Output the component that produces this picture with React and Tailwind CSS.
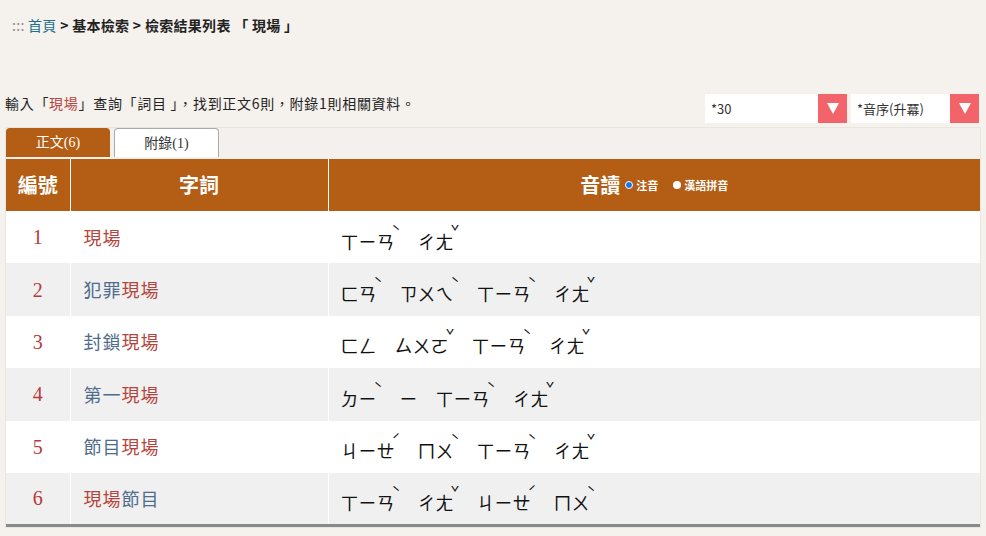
import React from "react";

const ROWS = [
  {
    no: 1,
    word: [["現場", "r"]],
    zy: [["ㄒㄧㄢ", "ˋ"], ["ㄔㄤ", "ˇ"]],
  },
  {
    no: 2,
    word: [["犯罪", "b"], ["現場", "r"]],
    zy: [["ㄈㄢ", "ˋ"], ["ㄗㄨㄟ", "ˋ"], ["ㄒㄧㄢ", "ˋ"], ["ㄔㄤ", "ˇ"]],
  },
  {
    no: 3,
    word: [["封鎖", "b"], ["現場", "r"]],
    zy: [["ㄈㄥ", ""], ["ㄙㄨㄛ", "ˇ"], ["ㄒㄧㄢ", "ˋ"], ["ㄔㄤ", "ˇ"]],
  },
  {
    no: 4,
    word: [["第一", "b"], ["現場", "r"]],
    zy: [["ㄉㄧ", "ˋ"], ["ㄧ", ""], ["ㄒㄧㄢ", "ˋ"], ["ㄔㄤ", "ˇ"]],
  },
  {
    no: 5,
    word: [["節目", "b"], ["現場", "r"]],
    zy: [["ㄐㄧㄝ", "ˊ"], ["ㄇㄨ", "ˋ"], ["ㄒㄧㄢ", "ˋ"], ["ㄔㄤ", "ˇ"]],
  },
  {
    no: 6,
    word: [["現場", "r"], ["節目", "b"]],
    zy: [["ㄒㄧㄢ", "ˋ"], ["ㄔㄤ", "ˇ"], ["ㄐㄧㄝ", "ˊ"], ["ㄇㄨ", "ˋ"]],
  },
];

const CJK = "font-['Microsoft_JhengHei','Noto_Sans_CJK_TC',sans-serif]";

function Select({ label, width }) {
  return (
    <div className={`flex h-[29px] ${width}`}>
      <div className="flex-1 bg-white pl-[6px] flex items-center text-[13px] text-[#333]">
        {label}
      </div>
      <div className="w-[29px] bg-[#f2636a] flex items-center justify-center">
        <svg width="12" height="11" viewBox="0 0 12 11">
          <path d="M0 0 L12 0 L6 11 Z" fill="#fff" />
        </svg>
      </div>
    </div>
  );
}

function Syllable({ chars, tone }) {
  return (
    <span className="inline-flex items-start mr-[18px]">
      <span>{chars}</span>
      {tone && (
        <span className="text-[15px] leading-none -ml-[3px] -mt-[5px] w-[8px]">
          {tone}
        </span>
      )}
    </span>
  );
}

export default function App() {
  return (
    <div className={`min-h-screen bg-[#f5f1ed] ${CJK}`}>
      {/* breadcrumb */}
      <div className="pt-[16px] pl-[12px] text-[14px] leading-[18px] text-[#222] font-bold tracking-[0.3px]">
        <span className="text-[#888] font-normal">:::</span>{" "}
        <span className="text-[#1c6f8e] font-normal">首頁</span>
        <span> &gt; 基本檢索 &gt; 檢索結果列表 「 現場 」</span>
      </div>

      {/* summary + selects */}
      <div className="mt-[60px] flex items-start justify-between pl-[5px] pr-[7px]">
        <div className="text-[14px] leading-[18px] tracking-[0.7px] text-[#222]">
          輸入「<span className="text-[#b5443c]">現場</span>」查詢「詞目 」，找到正文6則，附錄1則相關資料。
        </div>
        <div className="flex gap-[4px]">
          <Select label="*30" width="w-[142px]" />
          <Select label="*音序(升冪)" width="w-[128px]" />
        </div>
      </div>

      {/* panel */}
      <div className="mt-[4px] ml-[5px] w-[976px] border border-[#ebe5e0] bg-[#f4f0ed]">
        {/* tabs */}
        <div className="flex gap-[4px] h-[29px]">
          <div className="w-[104px] rounded-t-[4px] bg-[#b35e14] text-white text-[14px] flex items-center justify-center font-['Liberation_Serif','Noto_Sans_CJK_TC',serif]">
            正文(6)
          </div>
          <div className="w-[105px] rounded-t-[4px] bg-white border border-b-0 border-[#aaa] text-[#333] text-[14px] flex items-center justify-center font-['Liberation_Serif','Noto_Sans_CJK_TC',serif]">
            附錄(1)
          </div>
        </div>

        {/* table */}
        <table className="w-full border-collapse mt-[2px]">
          <thead>
            <tr className="bg-[#b35e14] text-white h-[52px]">
              <th className="w-[64px] border-r border-white text-[20px] font-bold">編號</th>
              <th className="w-[258px] border-r border-white text-[20px] font-bold">字詞</th>
              <th className="font-bold">
                <span className="inline-flex items-center gap-[5px]">
                  <span className="text-[20px]">音讀</span>
                  <span className="inline-flex items-center gap-[3px] text-[11px]">
                    <span className="w-[8px] h-[8px] rounded-full bg-[#1a73e8] border border-white inline-block" />
                    注音
                  </span>
                  <span className="inline-flex items-center gap-[3px] text-[11px] ml-[10px]">
                    <span className="w-[8px] h-[8px] rounded-full bg-white inline-block" />
                    漢語拼音
                  </span>
                </span>
              </th>
            </tr>
          </thead>
          <tbody className="border-b-[3px] border-[#8a8a8a]">
            {ROWS.map((r, i) => (
              <tr key={r.no} className={`h-[52.4px] ${i % 2 ? "bg-[#f0f0f0]" : "bg-white"}`}>
                <td className="border-r border-white text-center text-[20px] text-[#b53a3a] font-['Liberation_Serif',serif]">
                  {r.no}
                </td>
                <td className="border-r border-white pl-[13px] text-[18px] tracking-[1px]">
                  {r.word.map(([t, c], k) => (
                    <span key={k} className={c === "r" ? "text-[#b5443c]" : "text-[#4f6c8c]"}>
                      {t}
                    </span>
                  ))}
                </td>
                <td className="pl-[12px] pt-[8px] text-[18px] text-[#111]">
                  {r.zy.map(([ch, t], k) => (
                    <Syllable key={k} chars={ch} tone={t} />
                  ))}
                </td>
              </tr>
            ))}
          </tbody>
        </table>
      </div>
    </div>
  );
}
